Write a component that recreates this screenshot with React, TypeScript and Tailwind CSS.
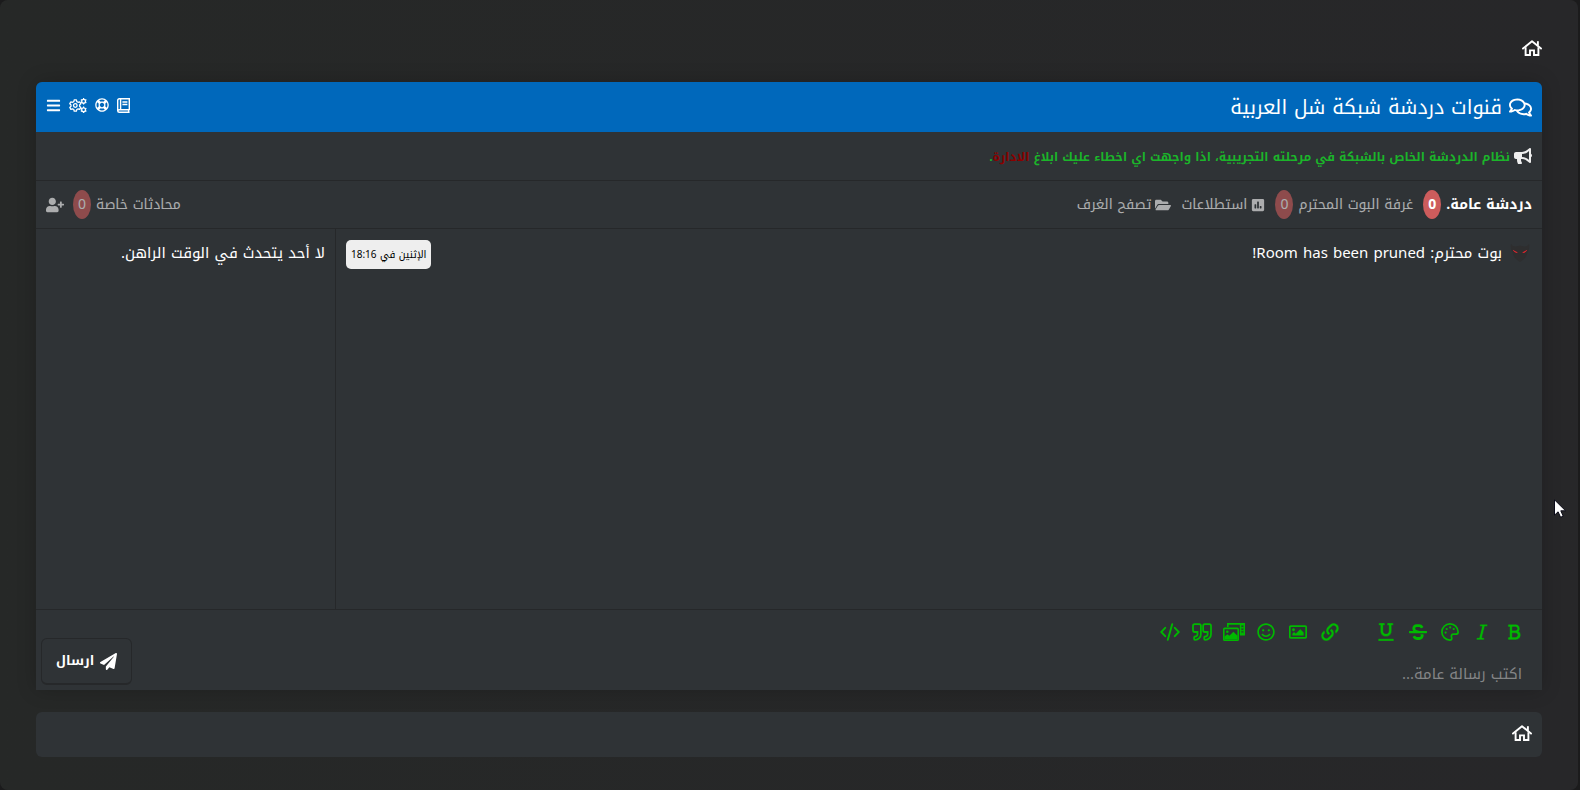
import type { ReactNode } from 'react';
import {
  FaBars,
  FaBold,
  FaBullhorn,
  FaFolderOpen,
  FaItalic,
  FaLink,
  FaPaperPlane,
  FaPoll,
  FaQuoteRight,
  FaRegComments,
  FaRegImage,
  FaRegLifeRing,
  FaRegSmile,
  FaStrikethrough,
  FaUnderline,
  FaUserPlus,
} from 'react-icons/fa';

// a stroke in the panel colour slims the solid icons down
const SLIM = 'stroke-[#2f3336] [stroke-width:18]';

function HomeIcon() {
  return (
    <svg viewBox="0 0 20 16" className="w-5 h-4" fill="none" stroke="currentColor" strokeWidth="1.9">
      <path d="M1 8.6 L10 1.2 L19 8.6" strokeLinecap="round" strokeLinejoin="round" />
      <path d="M15.9 1.2 V5.6" />
      <path d="M3.6 7.2 V15 H8 V10.4 H12 V15 H16.4 V7.2" />
    </svg>
  );
}

function BookIcon() {
  return (
    <svg viewBox="0 0 13 15" className="w-[13px] h-[15px]" fill="none" stroke="currentColor" strokeWidth="1.4">
      <path d="M12.3 12 V0.7 H2.4 Q0.7 0.7 0.7 2.4 V12.8 Q0.7 14.3 2.4 14.3 H12.6 M12.6 11.7 H2.4 Q0.7 11.7 0.7 13 M3.6 1 V11.5 M11.6 12 V14" />
      <path d="M5.4 4 H10.4 M5.4 6.5 H10.4" />
    </svg>
  );
}

function CogsIcon() {
  return (
    <svg viewBox="0 0 18 15" className="w-[18px] h-[15px]" fill="none" stroke="currentColor" strokeWidth="1.3" strokeLinejoin="round">
      <path d="M5.2 1.9 H7.4 L7.8 3.6 L9.1 4.3 L10.7 3.8 L11.8 5.7 L10.6 6.9 V8.3 L11.8 9.4 L10.7 11.3 L9.1 10.8 L7.8 11.5 L7.4 13.2 H5.2 L4.8 11.5 L3.5 10.8 L1.9 11.3 L0.8 9.4 L2 8.3 V6.9 L0.8 5.7 L1.9 3.8 L3.5 4.3 L4.8 3.6 Z" />
      <circle cx="6.3" cy="7.5" r="1.8" />
      <g>
        <circle cx="14.6" cy="3.2" r="1.9" />
        <circle cx="14.6" cy="11.8" r="1.9" />
      </g>
      <g strokeWidth="1.2">
        <path d="M14.6 0 V1.3 M14.6 5.1 V6.4 M11.8 1.6 L12.9 2.2 M17.4 1.6 L16.3 2.2 M11.8 4.8 L12.9 4.2 M17.4 4.8 L16.3 4.2" />
        <path d="M14.6 8.6 V9.9 M14.6 13.7 V15 M11.8 10.2 L12.9 10.8 M17.4 10.2 L16.3 10.8 M11.8 13.4 L12.9 12.8 M17.4 13.4 L16.3 12.8" />
      </g>
    </svg>
  );
}

function PaletteIcon() {
  return (
    <svg viewBox="0 0 18 18" className="w-[18px] h-[18px]" fill="none" stroke="currentColor" strokeWidth="1.7">
      <path d="M9 0.9 C4.4 0.9 0.9 4.5 0.9 9 C0.9 13.4 4.4 17.1 8.8 17.1 C10.6 17.1 11.2 15.7 10.6 14.4 C9.8 12.7 10.7 11.2 12.5 11.2 H14.8 C16.2 11.2 17.1 10.3 17.1 8.9 C17 4.3 13.4 0.9 9 0.9 Z" />
      <g fill="currentColor" stroke="none">
        <circle cx="4.6" cy="9.6" r="1.1" />
        <circle cx="5.7" cy="6" r="1.1" />
        <circle cx="9.2" cy="4.4" r="1.1" />
        <circle cx="12.7" cy="6" r="1.1" />
      </g>
    </svg>
  );
}

function MediaIcon() {
  return (
    <svg viewBox="0 0 22 18" className="w-[22px] h-[18px]" fill="none" stroke="currentColor" strokeWidth="1.6">
      <path d="M4.8 4 V0.9 H21.2 V11.6 H17" />
      <path d="M17.6 1 V11.6" strokeWidth="1.6" />
      <path d="M19.4 1 V2.6 M19.4 4 V5.4 M19.4 6.8 V8.2 M19.4 9.6 V11.6" strokeWidth="2.4" />
      <rect x="0.8" y="5.4" width="14.4" height="11.8" rx="0.8" />
      <path d="M1.5 16.5 V13.6 L4.4 11.2 L6.4 12.8 L10.4 8.8 L14.5 12.8 V16.5 Z" fill="currentColor" stroke="none" />
      <circle cx="4.3" cy="8.8" r="1.3" fill="currentColor" stroke="none" />
    </svg>
  );
}

function CodeIcon() {
  return (
    <svg viewBox="0 0 20 18" className="w-5 h-[18px]" fill="none" stroke="currentColor" strokeWidth="1.9" strokeLinecap="round">
      <path d="M5.2 4.8 L1.2 9 L5.2 13.2 M14.8 4.8 L18.8 9 L14.8 13.2 M12.2 1.2 L7.8 16.8" />
    </svg>
  );
}

function BotAvatar() {
  return (
    <svg viewBox="0 0 20 20" className="w-5 h-5">
      <path d="M1 1 Q3 4 6 3.5 Q10 2 14 3.5 Q17 4 19 1 Q20 6 17.5 9 Q17 13 14 16 L10 19 L6 16 Q3 13 2.5 9 Q0 6 1 1Z" fill="#2e2e2f" />
      <path d="M3 7.2 L7.4 9.6 Q5 10 3 7.2Z M17 7.2 L12.6 9.6 Q15 10 17 7.2Z" fill="#f0262e" stroke="#f0262e" strokeWidth="0.4" />
    </svg>
  );
}

const FORMAT_TOOLS = [
  { label: 'عريض', icon: <FaBold className={SLIM} /> },
  { label: 'مائل', icon: <FaItalic className={SLIM} /> },
  { label: 'لون', icon: <PaletteIcon /> },
  { label: 'يتوسطه خط', icon: <FaStrikethrough /> },
  { label: 'تسطير', icon: <FaUnderline className="stroke-[#2f3336] [stroke-width:10]" /> },
];

const INSERT_TOOLS = [
  { label: 'رابط', icon: <FaLink className={SLIM} /> },
  { label: 'صورة', icon: <FaRegImage /> },
  { label: 'ابتسامات', icon: <FaRegSmile /> },
  { label: 'وسائط', icon: <MediaIcon /> },
  { label: 'اقتباس', icon: <FaQuoteRight className="fill-none stroke-[#00b900] [stroke-width:50] overflow-visible" /> },
  { label: 'كود', icon: <CodeIcon /> },
];

function Toolbar({ tools }: { tools: { label: string; icon: ReactNode }[] }) {
  return (
    <div className="flex">
      {tools.map(tool => (
        <button key={tool.label} aria-label={tool.label} className="flex items-center justify-center w-8 h-8">
          {tool.icon}
        </button>
      ))}
    </div>
  );
}

function Badge() {
  return (
    <span className="flex items-center justify-center w-[18px] h-[29px] rounded-[50%] bg-[#cd5c5c]">0</span>
  );
}

export default function App() {
  return (
    <div dir="rtl" lang="ar" className="min-h-screen bg-[#1b1b1c] pr-[2px] font-['Noto_Kufi_Arabic','Noto_Sans',serif] text-white">
      <div className="relative min-h-screen rounded-lg bg-linear-to-r from-[#262827] to-[#272729] px-9">
        <nav className="flex h-[82px] items-center pt-[14px]">
          <a href="#" aria-label="الرئيسية"><HomeIcon /></a>
        </nav>

        <main className="rounded-t-md bg-[#2f3336] shadow-[0_0_20px_rgba(0,0,0,0.2)]">
          <header className="flex h-[50px] items-center justify-between rounded-t-md bg-[#0068bb] px-[10px]">
            <h1 className="flex items-center gap-[7px] text-xl leading-8">
              <FaRegComments size={23} />
              قنوات دردشة شبكة شل العربية
            </h1>
            <div className="flex items-center gap-2 pb-1 text-[15px]">
              <a href="#" aria-label="القوانين"><BookIcon /></a>
              <a href="#" aria-label="مساعدة"><FaRegLifeRing size={14} /></a>
              <a href="#" aria-label="الإعدادات"><CogsIcon /></a>
              <button aria-label="القائمة"><FaBars /></button>
            </div>
          </header>

          <div className="flex h-[49px] items-center gap-1 border-b border-[#26282a] px-[10px] text-xs font-bold text-[#1bb52a]">
            <FaBullhorn size={18} className="text-[#eee]" />
            <p className="pt-[2px]">
              نظام الدردشة الخاص بالشبكة في مرحلته التجريبية، اذا واجهت اي اخطاء عليك ابلاغ{' '}
              <a href="#" className="text-[#8b0000]">الادارة</a>.
            </p>
          </div>

          <div className="flex h-12 items-center justify-between border-b border-[#26282a] px-[10px] text-sm">
            <div className="flex items-center gap-[10px]">
              <a href="#" className="flex items-center gap-[5px] font-bold">دردشة عامة. <Badge /></a>
              <a href="#" className="flex items-center gap-[5px] opacity-60">غرفة البوت المحترم <Badge /></a>
              <a href="#" className="flex items-center gap-1 opacity-60"><FaPoll /> استطلاعات</a>
              <a href="#" className="flex items-center gap-1 opacity-60"><FaFolderOpen size={16} /> تصفح الغرف</a>
            </div>
            <div className="flex items-center gap-[9px] opacity-60">
              <a href="#" className="flex items-center gap-[5px]">محادثات خاصة <Badge /></a>
              <button aria-label="إضافة مستخدم"><FaUserPlus size={18} /></button>
            </div>
          </div>

          <div className="flex h-[381px] border-b border-[#26282a] text-[15px]">
            <section className="flex flex-1 items-start justify-between p-[10px]">
              <div className="flex items-center gap-2 pr-[2px] leading-7">
                <BotAvatar />
                <p>بوت محترم: Room has been pruned!</p>
              </div>
              <time className="mt-[1px] rounded-[5px] bg-[#eee] px-[5px] text-[10px] leading-[29px] text-black">الإثنين في 18:16</time>
            </section>
            <aside className="w-[300px] border-r border-[#26282a] p-[10px] leading-7">
              لا أحد يتحدث في الوقت الراهن.
            </aside>
          </div>

          <form className="flex h-20 items-end justify-between" onSubmit={e => e.preventDefault()}>
            <div className="flex h-full flex-1 flex-col px-3 pt-[6px]">
              <div className="flex gap-6 text-lg text-[#00b900]">
                <Toolbar tools={FORMAT_TOOLS} />
                <Toolbar tools={INSERT_TOOLS} />
              </div>
              <input
                type="text"
                aria-label="رسالة عامة"
                placeholder="اكتب رسالة عامة..."
                className="flex-1 bg-transparent px-2 pt-[10px] text-[15px] outline-none placeholder:text-[#848586]"
              />
            </div>
            <button className="m-[5px] flex h-[47px] items-center gap-[6px] rounded-md border border-b-2 border-[#26282a] px-[14px] text-[13px] font-bold">
              <FaPaperPlane size={17} />
              ارسال
            </button>
          </form>
        </main>

        <footer className="mt-[22px] flex h-[45px] items-center rounded-md bg-[#2f3336] px-[10px] pb-1">
          <a href="#" aria-label="الرئيسية"><HomeIcon /></a>
        </footer>

        <svg viewBox="0 0 12 19" className="absolute left-[1554px] top-[499px] h-[19px] w-3">
          <path d="M0.5 0.8 V16.2 L4.1 12.8 L6.6 18.3 L9.2 17.1 L6.8 11.8 H11.6 Z" fill="#fff" stroke="#0b0b18" />
        </svg>
      </div>
    </div>
  );
}
